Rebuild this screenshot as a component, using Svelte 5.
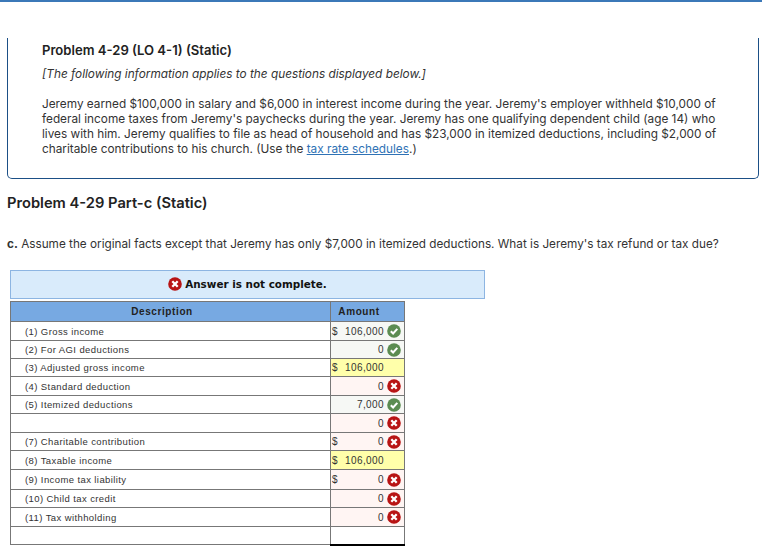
<script>
    const rows = [
        { label: "(1) Gross income", dollar: true, value: "106,000", state: "ok", h: 19 },
        { label: "(2) For AGI deductions", value: "0", state: "ok", h: 18 },
        { label: "(3) Adjusted gross income", dollar: true, value: "106,000", state: "calc", h: 18 },
        { label: "(4) Standard deduction", value: "0", state: "bad", h: 19 },
        { label: "(5) Itemized deductions", value: "7,000", state: "ok", h: 18 },
        { label: "", value: "0", state: "bad", h: 19 },
        { label: "(7) Charitable contribution", dollar: true, value: "0", state: "bad", h: 18 },
        { label: "(8) Taxable income", dollar: true, value: "106,000", state: "calc", h: 19 },
        { label: "(9) Income tax liability", dollar: true, value: "0", state: "bad", h: 20 },
        { label: "(10) Child tax credit", value: "0", state: "bad", h: 18 },
        { label: "(11) Tax withholding", value: "0", state: "bad", h: 19 },
        { label: "", value: "", state: "total", h: 18 }
    ];
</script>

{#snippet mark(ok)}
    <svg class="mark" viewBox="0 0 14 14" width="14" height="14">
        <circle cx="7" cy="7" r="6.8" fill={ok ? "#5b8c51" : "#b81414"} />
        {#if ok}
            <path d="M3.8 7.2 6.1 9.5 10.3 4.9" fill="none" stroke="#fff" stroke-width="2" />
        {:else}
            <path d="M4.3 4.3 9.7 9.7M9.7 4.3 4.3 9.7" fill="none" stroke="#fff" stroke-width="2.3" />
        {/if}
    </svg>
{/snippet}

<div class="topbar"></div>

<section class="panel">
    <h3>Problem 4-29 (LO 4-1) (Static)</h3>
    <p class="note">[The following information applies to the questions displayed below.]</p>
    <p class="facts">
        Jeremy earned $100,000 in salary and $6,000 in interest income during the year. Jeremy's employer withheld $10,000 of
        federal income taxes from Jeremy's paychecks during the year. Jeremy has one qualifying dependent child (age 14) who
        lives with him. Jeremy qualifies to file as head of household and has $23,000 in itemized deductions, including $2,000 of
        charitable contributions to his church. (Use the <a href="#schedules">tax rate schedules</a>.)
    </p>
</section>

<h2>Problem 4-29 Part-c (Static)</h2>

<p class="question"><b>c.</b> Assume the original facts except that Jeremy has only $7,000 in itemized deductions. What is Jeremy's tax refund or tax due?</p>

<div class="alert">
    {@render mark(false)}
    <span>Answer is not complete.</span>
</div>

<table>
    <thead>
        <tr>
            <th class="desc">Description</th>
            <th class="amt">Amount</th>
        </tr>
    </thead>
    <tbody>
        {#each rows as row}
            <tr style="height: {row.h}px">
                <td class="desc">{row.label}</td>
                <td class="amt {row.state}">
                    <div class="cell">
                        <span class="dollar">{row.dollar ? "$" : ""}</span>
                        <span class="value">{row.value}</span>
                        <span class="slot">
                            {#if row.state === "ok"}
                                {@render mark(true)}
                            {:else if row.state === "bad"}
                                {@render mark(false)}
                            {/if}
                        </span>
                    </div>
                </td>
            </tr>
        {/each}
    </tbody>
</table>

<style>
    :global(body) {
        background: #fff;
        color: #333;
        font-family: "Inter", "Liberation Sans", sans-serif;
    }

    .topbar {
        height: 2px;
        background: #3b78b8;
    }

    .panel {
        box-sizing: border-box;
        height: 141px;
        margin: 36px 3px 0 7px;
        padding: 4px 34px 0;
        border: 1px solid #1b4f86;
        border-top: 0;
        border-radius: 0 0 5px 5px;
        font-size: 11.8px;
        line-height: 15px;
    }

    h3 {
        margin: 0;
        font-size: 13.1px;
        line-height: 16px;
        font-weight: 600;
        color: #222;
    }

    .note {
        margin: 9px 0 0;
        font-style: italic;
    }

    .facts {
        margin: 15px 0 0;
        white-space: pre-line;
    }

    a {
        color: #2f72b5;
    }

    h2 {
        margin: 15px 0 0 7px;
        font-size: 14.7px;
        line-height: 18px;
        font-weight: 600;
        color: #222;
    }

    .question {
        margin: 24px 0 0 7px;
        font-size: 11.75px;
        line-height: 16px;
    }

    .alert {
        box-sizing: border-box;
        width: 475px;
        height: 29px;
        margin: 18px 0 0 10px;
        padding-bottom: 1px;
        display: flex;
        align-items: center;
        justify-content: center;
        gap: 3px;
        background: #d9ebfb;
        border: 1px solid #8db5e2;
        font-family: "DejaVu Sans", sans-serif;
        font-size: 10.4px;
        font-weight: 700;
        color: #111;
    }

    table {
        margin: 2px 0 0 10px;
        width: 395px;
        border-collapse: collapse;
        table-layout: fixed;
        font-family: "Liberation Sans", sans-serif;
        font-size: 9.5px;
        letter-spacing: 0.4px;
        color: #333;
    }

    th {
        box-sizing: border-box;
        height: 20px;
        padding: 0 17px 0 0;
        background: #77a9e2;
        border: 1px solid #777;
        font-size: 10px;
        letter-spacing: 0.6px;
        color: #222;
    }

    th.desc {
        width: 320px;
    }

    td {
        padding: 0;
        border: 1px solid #777;
    }

    td.desc {
        padding-left: 14px;
    }

    td.amt {
        font-size: 10px;
    }

    .cell {
        display: flex;
        align-items: center;
        padding-left: 1px;
    }

    .value {
        flex: 1;
        text-align: right;
    }

    .slot {
        width: 20px;
        height: 14px;
        display: flex;
        justify-content: flex-end;
        padding-right: 3px;
        box-sizing: border-box;
    }

    .ok {
        background: #f6f8f5;
    }

    .bad {
        background: #fff5f3;
    }

    .calc {
        background: #ffffaa;
        border-top: 1px solid #000;
    }

    .total {
        border-top: 1px solid #000;
        border-bottom: 2px solid #000;
    }

    .mark {
        flex: none;
    }
</style>
